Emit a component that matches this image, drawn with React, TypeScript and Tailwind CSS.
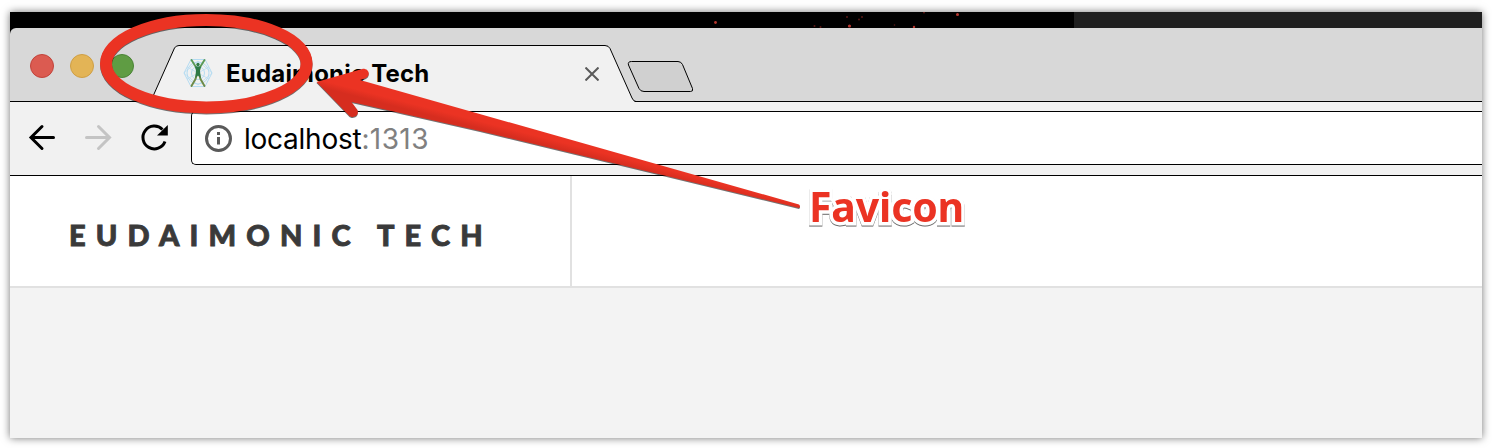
import React from "react";

function DesktopStrip() {
  return (
    <div className="flex h-[16px] shrink-0 bg-black">
      <svg className="ml-[690px]" width="374" height="16" fill="#b8372f">
        <circle cx="15.500" cy="10.500" r="1.400" />
        <circle cx="149.500" cy="14" r="1.600" />
        <circle cx="214" cy="15" r="1.200" />
        <circle cx="257.500" cy="2.500" r="1.500" />
        <g fill="#5a1714">
          <circle cx="114.500" cy="14" r="1" />
          <circle cx="120.500" cy="15" r="1" />
          <circle cx="147" cy="5" r="1" />
          <circle cx="159" cy="7.500" r="1" />
          <circle cx="162" cy="5" r="1" />
          <circle cx="194.500" cy="13" r="0.800" />
          <circle cx="224" cy="0.500" r="1" />
        </g>
      </svg>
      <div className="w-[408px] bg-[#1f1f1f]" />
    </div>
  );
}

function WindowButtons() {
  return (
    <div className="flex h-6 gap-4 pl-5 mt-[26px]">
      <span className="size-6 rounded-full border border-[#c2433b] bg-[#db5b51]" />
      <span className="size-6 rounded-full border border-[#cf9f45] bg-[#e3b456]" />
      <span className="size-6 rounded-full border border-[#4a8436] bg-[#5f9c43]" />
    </div>
  );
}

function SiteIcon() {
  return (
    <svg width="30" height="30" viewBox="0 0 30 30" fill="none">
      <g stroke="#b5dcf2" strokeWidth="1">
        <path d="M8 1.500H22L29 15L22 28.500H8L1 15Z" />
        <circle cx="15" cy="15" r="11" />
        <circle cx="15" cy="15" r="6.500" />
        <path d="M4 9L26 21M4 21L26 9M1 15L15 3L29 15L15 27Z" strokeOpacity=".7" />
      </g>
      <g strokeLinecap="round">
        <path d="M8.500 2L13.500 10M16.500 10L21.500 2" stroke="#5c9a55" strokeWidth="1.900" />
        <path d="M14 16L12.500 21L8.500 28M16 16L17.500 21L21.500 28" stroke="#6e8b48" strokeWidth="1.900" />
      </g>
      <path d="M12 8.500H18L17 13L17.800 20L15 17.500L12.200 20L13 13Z" fill="#2f7a46" />
      <circle cx="15" cy="6.500" r="1.700" fill="#2f7a46" />
    </svg>
  );
}

function TabStrip() {
  return (
    <div className="flex h-[74px] shrink-0 rounded-tl-[6px] bg-[#d8d8d8] shadow-[inset_0_-1px_0_#000]">
      <WindowButtons />
      <div className="relative ml-[16px] mt-[16px] h-[58px] w-[490px]">
        <svg className="absolute left-0 top-0" width="490" height="58" fill="none">
          <path d="M0 58L2 55L25 4Q26.500 1.500 29 1.500H455Q458.500 1.500 460 4.500L482 54L485 58Z" fill="#f1f1f1" />
          <path d="M0 57.500Q1 57 2 54.500L24.500 4Q26 1.500 29 1.500H455Q458.500 1.500 460 4.500L482 54Q483.500 57.500 486 57.500" stroke="#000" />
        </svg>
        <div className="relative flex h-[58px] items-center pl-[33px]">
          <SiteIcon />
          <span className="ml-[13px] w-[340px] whitespace-nowrap pt-[2px] font-['Inter'] text-[24px] font-bold tracking-[0.200px] text-black">
            Eudaimonic Tech
          </span>
          <svg className="mt-[2px] ml-[19px]" width="14" height="14" stroke="#5a5a5a" strokeWidth="2">
            <path d="M0.500 0.500L13.500 13.500M13.500 0.500L0.500 13.500" />
          </svg>
        </div>
      </div>
      <svg className="mt-[32px] -ml-[13px]" width="68" height="34">
        <path d="M4.500 1.500H51Q54 1.500 55.500 4.500L65.500 28.500Q66.500 31.500 63.500 31.500H17Q13.500 31.500 12 28.500L1.500 5Q0.500 1.500 4.500 1.500Z" fill="#d0d0d0" stroke="#000" />
      </svg>
    </div>
  );
}

function Toolbar() {
  return (
    <div className="flex h-[74px] shrink-0 border-b border-black bg-[#f1f1f1] pt-[9px]">
      <div className="flex w-[181px] gap-[28px] pl-[18px] pt-[12px]">
        <svg width="28" height="28" fill="none" stroke="#000" strokeWidth="3" strokeLinecap="round">
          <path d="M25.500 14.500H4M14 3.500L3 14.500L14 25.500" />
        </svg>
        <svg width="28" height="28" fill="none" stroke="#c4c4c4" strokeWidth="3" strokeLinecap="round">
          <path d="M2.500 14.500H24M14.500 3.500L25.500 14.500L14.500 25.500" />
        </svg>
        <svg width="28" height="29" fill="none">
          <path d="M22.500 6.500A11.400 11.400 0 1 0 25 18.500" stroke="#000" strokeWidth="3" />
          <path d="M27.800 2V12.500H17Z" fill="#000" />
        </svg>
      </div>
      <div className="flex h-[54px] flex-1 items-center rounded-l-[5px] border border-r-0 border-black bg-white pl-[12px]">
        <svg width="28" height="28" fill="none" stroke="#5a5a5a" strokeWidth="3">
          <circle cx="14.500" cy="14.500" r="12" />
          <path d="M14.500 13V20.500M14.500 8V11" />
        </svg>
        <span className="ml-[12px] whitespace-nowrap pt-[2px] font-['Inter'] text-[28px] tracking-[-0.250px] text-black">
          localhost<span className="tracking-[0.400px] text-[#808080]">:1313</span>
        </span>
      </div>
    </div>
  );
}

function SiteHeader() {
  return (
    <div className="flex h-[112px] shrink-0 border-b-2 border-[#e1e1e1] bg-white">
      <div className="flex w-[562px] items-center border-r-2 border-[#e1e1e1] pl-[59px] pt-[6px]">
        <h1 className="whitespace-nowrap font-['Lato'] text-[29px] font-black leading-none tracking-[10.150px] text-[#3a3a3a] [-webkit-text-stroke:0.9px_#3a3a3a]">
          EUDAIMONIC TECH
        </h1>
      </div>
    </div>
  );
}

function Annotation() {
  return (
    <div className="pointer-events-none absolute inset-0">
      <svg className="absolute inset-0" width="1492" height="448">
        <defs>
          <linearGradient id="arrow" gradientUnits="userSpaceOnUse" x1="578.500" y1="139.300" x2="573.500" y2="158.700">
            <stop offset="0.350" stopColor="#eb3323" />
            <stop offset="0.700" stopColor="#d62d1f" />
          </linearGradient>
          <filter id="drop" filterUnits="userSpaceOnUse" x="80" y="0" width="740" height="230" colorInterpolationFilters="sRGB">
            <feDropShadow dx="0" dy="1" stdDeviation="0.700" floodOpacity=".55" />
          </filter>
        </defs>
        <g filter="url(#drop)">
          <ellipse cx="206.300" cy="63.700" rx="100.300" ry="43.700" fill="none" stroke="#eb3323" strokeWidth="12" />
          <path d="M316.500 82L363 68.800C370 68.800 370.500 76.500 365 78.500L360 80L799 204.500Q801 206.500 799 208L480 131L351.500 102L357.500 110C359.500 117 351.500 119 348.500 115Z" fill="url(#arrow)" />
        </g>
      </svg>
      <span className="absolute left-[809px] top-[178px] whitespace-nowrap font-['Noto_Sans'] text-[41px] font-bold leading-[57px] tracking-[-0.150px] text-[#eb3323] [paint-order:stroke_fill] [stroke-linejoin:round] [-webkit-text-stroke:7px_white] [filter:drop-shadow(0_1px_0.7px_rgba(0,0,0,0.6))]">
        Favicon
      </span>
    </div>
  );
}

export default function App() {
  return (
    <div className="relative h-[448px] w-[1492px] overflow-hidden bg-white px-[10px] pt-[12px]">
      <main className="flex h-[426px] w-[1472px] flex-col bg-[#f3f3f3] shadow-[0_0_8px_rgba(0,0,0,0.55)]">
        <DesktopStrip />
        <div className="flex shrink-0 flex-col bg-black">
          <TabStrip />
        </div>
        <Toolbar />
        <SiteHeader />
      </main>
      <Annotation />
    </div>
  );
}
